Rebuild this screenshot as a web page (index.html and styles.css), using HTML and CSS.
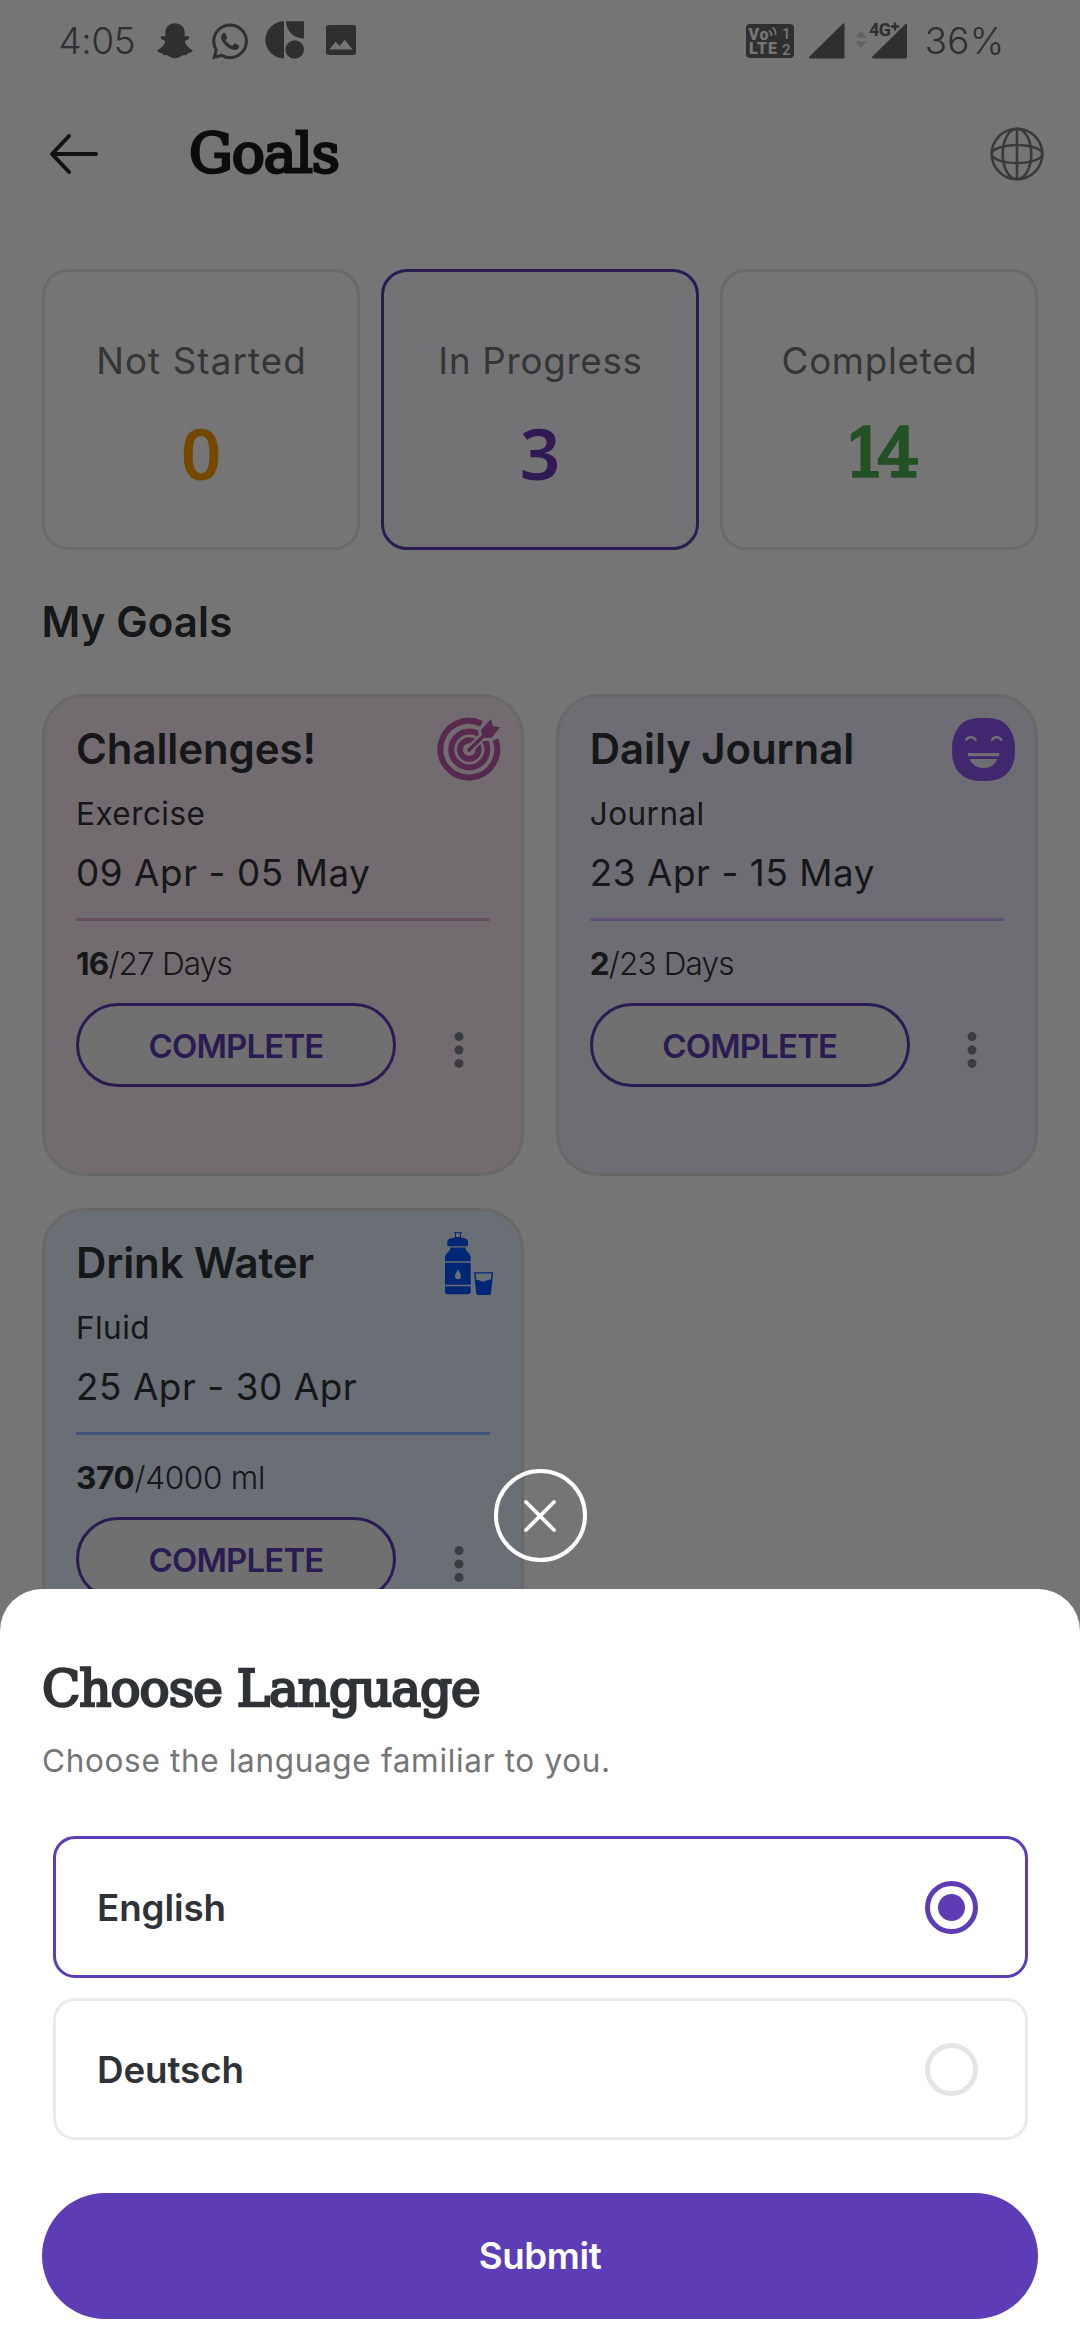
FILE: index.html
```html
<!DOCTYPE html>
<html lang="en">
<head>
<meta charset="utf-8">
<title>Goals</title>
<link rel="stylesheet" href="styles.css">
</head>
<body>
<div class="screen">
  <div class="app">
    <div class="statusbar">
      <span class="clock">4:05</span>
      <svg class="i-ghost" viewBox="0 0 36 36"><path d="M18 .3C23.5.3 27.7 4 27.7 9.800V13.500C29.300 12.900 31.500 12.600 32.200 14C32.600 16 29.300 17.200 27.800 18C28.500 22 32 25.500 35.800 27.300C35.500 29.500 32.500 30 30.300 30.500L29.600 32.200C26.500 31.400 24.500 32.700 22.300 34.200C19.700 35.700 16.300 35.700 13.700 34.200C11.500 32.700 9.500 31.400 6.400 32.200L5.700 30.500C3.500 30 .5 29.500.2 27.300C4 25.500 7.500 22 8.200 18C6.700 17.200 3.400 16 3.800 14C4.500 12.600 6.700 12.900 8.300 13.500V9.800C8.300 4 12.500.3 18 .3Z"/></svg>
      <svg class="i-chat" viewBox="0 0 24 24"><path d="M17.472 14.382c-.297-.149-1.758-.867-2.03-.967-.273-.099-.471-.148-.67.15-.197.297-.767.966-.94 1.164-.173.199-.347.223-.644.075-.297-.15-1.255-.463-2.39-1.475-.883-.788-1.48-1.761-1.653-2.059-.173-.297-.018-.458.13-.606.134-.133.298-.347.446-.52.149-.174.198-.298.298-.497.099-.198.05-.371-.025-.52-.075-.149-.669-1.612-.916-2.207-.242-.579-.487-.5-.669-.51-.173-.008-.371-.01-.57-.01-.198 0-.52.074-.792.372-.272.297-1.04 1.016-1.04 2.479 0 1.462 1.065 2.875 1.213 3.074.149.198 2.096 3.2 5.077 4.487.709.306 1.262.489 1.694.625.712.227 1.36.195 1.871.118.571-.085 1.758-.719 2.006-1.413.248-.694.248-1.289.173-1.413-.074-.124-.272-.198-.57-.347m-5.421 7.403h-.004a9.87 9.87 0 01-5.031-1.378l-.361-.214-3.741.982.998-3.648-.235-.374a9.86 9.86 0 01-1.51-5.26c.001-5.45 4.436-9.884 9.888-9.884 2.64 0 5.122 1.03 6.988 2.898a9.825 9.825 0 012.893 6.994c-.003 5.45-4.437 9.884-9.885 9.884m8.413-18.297A11.815 11.815 0 0012.05 0C5.495 0 .16 5.335.157 11.892c0 2.096.547 4.142 1.588 5.945L.057 24l6.305-1.654a11.882 11.882 0 005.683 1.448h.005c6.554 0 11.89-5.335 11.893-11.893a11.821 11.821 0 00-3.48-8.413z"/></svg>
      <svg class="i-shapes" viewBox="0 0 40 38"><path d="M19 .3V37.500A18.600 18.600 0 0 1 19 .3ZM21 .3H39V17.500A17.500 17.500 0 0 1 21 .3Z"/><circle cx="29.700" cy="28.500" r="9.300"/></svg>
      <svg class="i-image" viewBox="0 0 30 30"><path fill-rule="evenodd" d="M3 0H27A3 3 0 0 1 30 3V27A3 3 0 0 1 27 30H3A3 3 0 0 1 0 27V3A3 3 0 0 1 3 0ZM3.300 24.500H26.500L18.800 14.800L13.600 21L9.600 16.800Z"/></svg>
      <span class="spacer"></span>
      <svg class="i-volte" viewBox="0 0 48 34"><rect width="48" height="34" rx="4"/><text x="2.500" y="15.500" textLength="20">Vo</text><text x="3" y="30" textLength="28">LTE</text><text class="thin" x="36" y="14.500">1</text><text class="thin" x="36" y="30.500">2</text><path class="wave" d="M23 6.500Q26 8.500 25.500 12M26.500 3.500Q30.500 6.500 29.500 11"/></svg>
      <svg class="i-signal" viewBox="0 0 36 36"><path d="M0 34L34 .5Q35.500 0 35.500 1.500V34Q35.500 35.500 34 35.500H1Q0 35.500 0 34Z"/></svg>
      <svg class="i-data" viewBox="0 0 52 38"><path class="faint" d="M0 16.500L6 10L12 16.500ZM0 20.500H12L6 27Z"/><path d="M17 36L51 2.500Q52 2 52 3.500V36Q52 37.500 50.500 37.500H18Q17 37.500 17 36Z"/><text x="14" y="15" textLength="22">4G</text><path class="plus" d="M36 5.500H44M40 1.500V9.500"/></svg>
      <span class="battery">36%</span>
    </div>

    <header class="appbar">
      <svg class="i-back" viewBox="0 0 48 40"><path d="M46 20H3M19 2L2 20L19 38"/></svg>
      <h1 class="page-title">Goals</h1>
      <svg class="i-globe" viewBox="0 0 54 54"><circle cx="27" cy="27" r="25.300"/><ellipse cx="27" cy="27" rx="14.300" ry="25.300"/><ellipse cx="27" cy="27" rx="25.300" ry="9"/><path d="M27 1.700V52.300"/></svg>
    </header>

    <section class="stats">
      <div class="stat"><span class="stat-label wide">Not Started</span><span class="stat-value orange">0</span></div>
      <div class="stat active"><span class="stat-label">In Progress</span><span class="stat-value purple">3</span></div>
      <div class="stat"><span class="stat-label">Completed</span><span class="stat-value slab green">14</span></div>
    </section>

    <h2 class="section-title">My Goals</h2>

    <section class="goals">
      <article class="goal pink">
        <div class="goal-head">
          <h3>Challenges!</h3>
          <svg class="goal-icon" viewBox="0 0 63 63"><g class="rings"><path d="M43.500 5.800A28.400 28.400 0 1 0 57.500 21.500"/><circle cx="31.300" cy="31.500" r="18"/><circle cx="31.300" cy="31.500" r="9.300"/></g><path class="gap" d="M31.300 31.500L50 13"/><path class="gap-tip" d="M43 12L53 1L54.700 8L62 9.300L53.700 19.700L44.500 20Z"/><path class="shaft" d="M31 32L46 17.500"/><path class="fill" d="M43 12L53 1L54.700 8L62 9.300L53.700 19.700L44.500 20Z"/></svg>
        </div>
        <p class="kind">Exercise</p>
        <p class="dates">09 Apr - 05 May</p>
        <hr>
        <p class="progress"><b>16</b>/27 Days</p>
        <div class="actions">
          <button class="complete">COMPLETE</button>
          <svg class="i-more" viewBox="0 0 10 36"><circle cx="5" cy="4.600" r="4.500"/><circle cx="5" cy="18" r="4.500"/><circle cx="5" cy="31.400" r="4.500"/></svg>
        </div>
      </article>

      <article class="goal violet">
        <div class="goal-head">
          <h3>Daily Journal</h3>
          <svg class="goal-icon" viewBox="0 0 63 63"><path class="fill" d="M31.500 0C42 0 50 1 55.500 8C61 15 63 22 63 31.500C63 41 61.500 48.500 55.500 55C49.500 61.500 41 63 31.500 63C22 63 13.500 61.500 7.500 55C1.500 48.500 0 41 0 31.500C0 22 2 15 7.500 8C13 1 21 0 31.500 0Z"/><path class="eye" d="M14 22.800A5 4.500 0 0 1 23.800 22.800M39.700 22.800A5 4.500 0 0 1 49.500 22.800"/><path class="teeth" d="M15.500 35H47.500L46.800 38.300H16.200ZM17.500 41H45.500Q41.500 50 31.500 50Q21.500 50 17.500 41Z"/></svg>
        </div>
        <p class="kind">Journal</p>
        <p class="dates">23 Apr - 15 May</p>
        <hr>
        <p class="progress"><b>2</b>/23 Days</p>
        <div class="actions">
          <button class="complete">COMPLETE</button>
          <svg class="i-more" viewBox="0 0 10 36"><circle cx="5" cy="4.600" r="4.500"/><circle cx="5" cy="18" r="4.500"/><circle cx="5" cy="31.400" r="4.500"/></svg>
        </div>
      </article>

      <article class="goal blue">
        <div class="goal-head">
          <h3>Drink Water</h3>
          <svg class="goal-icon" viewBox="0 0 63 63"><g transform="translate(7)"><path class="fill" fill-rule="evenodd" d="M9 .3H17V1.300H16V5.400C20 6 23 7 23 9.500V13Q23 14.300 21.700 14.300H3.600Q2.300 14.300 2.300 13V9.500C2.300 7 6 6 10 5.400V1.300H9ZM11 1.300V5H15V1.300Z"/><path class="fill" d="M5.300 15.500H20.500C20.500 20.500 25.700 20.500 25.700 26V29.300H0V26C0 20.500 5.300 20.500 5.300 15.500ZM0 54.300H25.700V59.500Q25.700 62.300 23 62.300H2.700Q0 62.300 0 59.500Z"/><path class="fill" fill-rule="evenodd" d="M0 30.700H25.700V52.800H0ZM13 37.500C11 41 10 42.500 10 44.200A3 3 0 0 0 16 44.200C16 42.500 15 41 13 37.500Z"/><path class="fill" fill-rule="evenodd" d="M29 40.300H48.200L46 61Q45.800 63 44 63H33.200Q31.400 63 31.200 61ZM30.600 41.500L31.400 48.500C34 47 36 50.300 39 49.500C42 48.500 43 47.500 45.800 47.500L46.600 41.500Z"/></g></svg>
        </div>
        <p class="kind">Fluid</p>
        <p class="dates">25 Apr - 30 Apr</p>
        <hr>
        <p class="progress loose"><b>370</b>/4000 ml</p>
        <div class="actions">
          <button class="complete">COMPLETE</button>
          <svg class="i-more" viewBox="0 0 10 36"><circle cx="5" cy="4.600" r="4.500"/><circle cx="5" cy="18" r="4.500"/><circle cx="5" cy="31.400" r="4.500"/></svg>
        </div>
      </article>
    </section>
  </div>

  <div class="scrim"></div>

  <div class="overlay">
    <button class="close" aria-label="Close"><svg viewBox="0 0 32 32"><path d="M2 2L30 30M30 2L2 30"/></svg></button>
    <section class="sheet">
      <h2 class="sheet-title">Choose Language</h2>
      <p class="sheet-sub">Choose the language familiar to you.</p>
      <div class="options">
        <div class="option selected"><span>English</span><i class="radio"></i></div>
        <div class="option"><span>Deutsch</span><i class="radio"></i></div>
      </div>
      <button class="submit">Submit</button>
    </section>
  </div>
</div>
</body>
</html>
```
FILE: styles.css
```css
* { box-sizing: border-box; margin: 0; padding: 0; }
body { font-family: Inter, sans-serif; background: #fff; color: #2f3236; }
button { font-family: inherit; border: none; background: none; }
svg { display: block; flex: none; overflow: visible; }

.screen { position: relative; width: 1080px; height: 2340px; overflow: hidden; background: #fff; }
.app { display: flex; flex-direction: column; }

/* Status bar */
.statusbar { display: flex; align-items: center; height: 82px; padding: 0 75.500px 0 58.500px; color: #666; fill: #666; }
.clock, .battery { font-size: 36.75px; font-weight: 300; line-height: 44px; letter-spacing: -.3px; }
.clock { width: 98.5px; }
.battery { margin-left: 18px; letter-spacing: .3px; }
.spacer { flex: 1; }
.i-ghost { width: 36px; height: 36px; }
.i-chat { width: 36px; height: 37px; margin-left: 19px; }
.i-shapes { width: 40px; height: 38px; margin-left: 17px; margin-top: -3px; }
.i-image { width: 30px; height: 30px; margin-left: 20.500px; margin-top: -2px; }
.i-volte { width: 48px; height: 34px; }
.i-volte text { font: 900 16px Roboto, sans-serif; fill: #fff; }
.i-volte .thin { font-weight: 500; font-size: 15px; }
.i-volte .wave { fill: none; stroke: #fff; stroke-width: 1.6; }
.i-signal { width: 36px; height: 36px; margin-left: 15px; }
.i-data { width: 52px; height: 38px; margin-left: 10px; margin-top: -2px; }
.i-data text { font: 700 18px Roboto, sans-serif; }
.i-data .faint { fill: #d6d6d6; }
.i-data .plus { fill: none; stroke: #666; stroke-width: 2.4; }

/* App bar */
.appbar { display: flex; align-items: center; height: 143px; padding: 0 36px 0 49.500px; }
.i-back { width: 48px; height: 40px; fill: none; stroke: #27292c; stroke-width: 4; stroke-linecap: round; stroke-linejoin: round; }
.page-title, .sheet-title { font-family: "DejaVu Serif", serif; font-weight: 400; white-space: nowrap; }
.page-title { flex: 1; margin: -2px 0 0 91.500px; font-size: 55px; line-height: 64px; letter-spacing: -1.2px; color: #1b1c1f; -webkit-text-stroke: 2.8px #1b1c1f; }
.i-globe { width: 54px; height: 54px; fill: none; stroke: #7e7e7e; stroke-width: 2.600; }

/* Counters */
.stats { display: grid; grid-template-columns: repeat(3, 1fr); gap: 21px; margin-top: 44px; padding: 0 42px; }
.stat { display: flex; flex-direction: column; align-items: center; height: 281px; padding-top: 66.500px; border: 3px solid #e8e8e8; border-radius: 26px; }
.stat.active { border-color: #5c3db5; background: #fafaff; }
.stat-label { padding-left: 1px; font-size: 36.75px; line-height: 44px; letter-spacing: .7px; color: #757575; }
.stat-label.wide { letter-spacing: 1.1px; }
.stat-value { margin-top: 30px; font: 600 71px/80px "Noto Sans", sans-serif; }
.stat-value.slab { margin-top: 31.500px; font: 400 66px/80px "DejaVu Serif", serif; letter-spacing: -9px; padding-right: 3px; -webkit-text-stroke: 3.400px #4caf50; }
.orange { color: #ff9d00; }
.purple { color: #673ab7; }
.green { color: #4caf50; }

.section-title { margin: 47.400px 0 46.600px 41.500px; font-size: 42px; font-weight: 600; line-height: 50px; letter-spacing: .1px; }

/* Goal cards */
.goals { display: grid; grid-template-columns: 1fr 1fr; gap: 31.500px; padding: 0 42px; }
.goal { height: 482.500px; padding: 27px 31px 0; border: 3px solid #e2e2e2; border-radius: 42px; background: var(--tint); }
.pink { --tint: #f9ebf3; --line: #dfaecb; --ink: #bd5baa; }
.violet { --tint: #efedfa; --line: #d0b2fe; --ink: #8f55ef; }
.blue { --tint: #e6efff; --line: #8cb4ff; --ink: #0055ff; }
.goal-head { display: flex; justify-content: space-between; height: 50px; }
.goal-head h3 { font-size: 42px; font-weight: 600; line-height: 50px; letter-spacing: -.1px; white-space: nowrap; }
.goal-icon { width: 63px; height: 63px; margin: -6.300px -10.500px 0 0; }
.goal-icon .fill { fill: var(--ink); }
.rings { fill: none; stroke: var(--ink); stroke-width: 6; }
.gap { fill: none; stroke: var(--tint); stroke-width: 8; stroke-linecap: round; }
.gap-tip { fill: var(--tint); stroke: var(--tint); stroke-width: 6; stroke-linejoin: round; }
.shaft { fill: none; stroke: var(--ink); stroke-width: 3.600; stroke-linecap: round; }
.eye { fill: none; stroke: var(--tint); stroke-width: 2.400; }
.teeth { fill: var(--tint); }
.kind { margin-top: 20.600px; font-size: 31.500px; line-height: 38px; letter-spacing: .45px; }
.dates { margin-top: 18.400px; font-size: 36.750px; line-height: 44px; letter-spacing: .6px; }
.goal hr { height: 3px; margin-top: 23px; border: none; background: var(--line); }
.progress { margin-top: 24px; font-size: 31.500px; font-weight: 300; line-height: 38px; letter-spacing: -.82px; }
.progress.loose { letter-spacing: -.3px; }
.progress b { font-weight: 700; }
.actions { display: flex; align-items: center; margin-top: 20.500px; }
.complete { width: 320px; height: 84px; padding-top: 2px; border: 3px solid #5c3db5; border-radius: 42px; background: #f5f5f5; color: #5c3db5; font-size: 33px; font-weight: 600; letter-spacing: -.85px; }
.i-more { width: 10px; height: 36px; margin: 10px 0 0 57.500px; fill: #7d868c; }

/* Modal layer */
.scrim { position: absolute; inset: 0; background: rgba(0, 0, 0, .54); }
.overlay { position: absolute; left: 0; right: 0; bottom: 0; display: flex; flex-direction: column; align-items: center; }
.close { display: grid; place-items: center; width: 93px; height: 93px; margin-bottom: 27px; border: 4.500px solid #fff; border-radius: 50%; }
.close svg { width: 32px; height: 32px; fill: none; stroke: #fff; stroke-width: 3.800; stroke-linecap: round; }
.sheet { width: 100%; height: 751px; padding: 70px 42px 21px; border-radius: 42px 42px 0 0; background: #fff; }
.sheet-title { font-size: 50px; line-height: 60px; letter-spacing: -1px; -webkit-text-stroke: 2.500px #2f3236; }
.sheet-sub { margin-top: 23.200px; font-size: 31.500px; line-height: 38px; letter-spacing: .67px; color: #757575; }
.options { display: flex; flex-direction: column; gap: 19.600px; margin-top: 55.800px; padding: 0 10.500px; }
.option { display: flex; align-items: center; justify-content: space-between; height: 142.400px; padding: 0 47px 0 41.500px; border: 3px solid #ebebeb; border-radius: 22px; font-size: 36.750px; font-weight: 600; letter-spacing: -.1px; }
.option.selected { border-color: #5c3db5; }
.radio { display: grid; place-items: center; width: 53px; height: 53px; border: 5px solid #e5e5e5; border-radius: 50%; }
.selected .radio { border-color: #5c3db5; }
.selected .radio::after { content: ""; width: 27px; height: 27px; border-radius: 50%; background: #5c3db5; }
.submit { display: block; width: 100%; height: 126px; margin-top: 52.600px; border-radius: 63px; background: #5c3db5; color: #fff; font-size: 36.750px; font-weight: 600; letter-spacing: -.4px; }
```
